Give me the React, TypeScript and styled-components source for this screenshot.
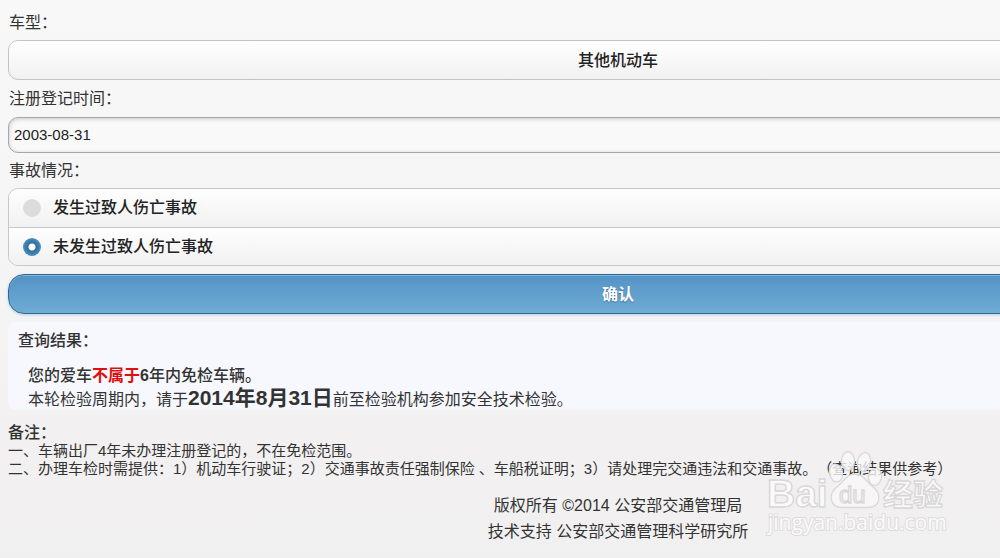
import React, { useState } from "react";
import styled, { createGlobalStyle } from "styled-components";

const GlobalStyle = createGlobalStyle`
  * { box-sizing: border-box; }
  html { min-height: 100%; background: #f2f0f1; }
  body {
    margin: 0;
    color: #333;
    font-family: "Liberation Sans", "Noto Sans CJK SC", sans-serif;
    font-size: 16px;
    text-spacing-trim: space-all;
  }
`;

const Viewport = styled.div`
  position: relative;
  min-height: 100vh;
  overflow: hidden;
  background: linear-gradient(#f8f8f8, #f5f4f5 55%, #f2f0f1 80%, #f1f0f0);
`;

/* The form is laid out wider than the window and runs off its right edge. */
const Page = styled.main`
  width: calc(100% + 236px);
  padding: 8px;
`;

const FieldLabel = styled.label`
  display: block;
  height: 28px;
  margin-bottom: 4px;
  padding-left: 1px;
  line-height: 30px;
`;

const GroupLabel = styled.legend`
  height: 28px;
  padding: 0 0 0 1px;
  margin-bottom: 4px;
  line-height: 30px;
`;

const Select = styled.select`
  display: block;
  width: 100%;
  height: 40px;
  margin-bottom: 4px;
  padding: 0;
  appearance: none;
  border: 1px solid #c4c4c4;
  border-radius: 10px;
  background: linear-gradient(#fff, #f1f1f1);
  color: #222;
  font: inherit;
  font-weight: 500;
  text-align: center;
  text-align-last: center;
`;

const TextInput = styled.input`
  display: block;
  width: 100%;
  height: 36px;
  margin: 5px 0 3px;
  padding: 0 5px 2px;
  border: 1px solid #a6a6a6;
  border-radius: 10px;
  background: #f9f9f9;
  box-shadow: inset 0 1px 4px rgba(0, 0, 0, 0.2);
  color: #222;
  font: inherit;
  font-size: 15px;
  outline: none;
`;

const Fieldset = styled.fieldset`
  margin: 0 0 8px;
  padding: 0;
  border: 0;
`;

const Options = styled.div`
  border: 1px solid #c8c8c8;
  border-radius: 10px;
  overflow: hidden;
`;

const Option = styled.label`
  display: flex;
  align-items: center;
  gap: 12px;
  height: 38px;
  padding-left: 14px;
  background: linear-gradient(#fefefe, #f1f1f1);
  color: #222;
  font-weight: 500;
  line-height: 20px;

  & + & {
    border-top: 1px solid #c8c8c8;
  }
`;

const Radio = styled.input`
  width: 18px;
  height: 18px;
  margin: 0;
  appearance: none;
  border-radius: 50%;
  background: #dcdcdc;

  &:checked {
    background: radial-gradient(circle, #fff 3px, #2f6f9f 4px, #4a90c0 9px);
  }
`;

const Submit = styled.button`
  display: block;
  width: 100%;
  height: 40px;
  margin-bottom: 8px;
  padding: 0 0 2px;
  border: 1px solid #2f6a92;
  border-radius: 16px;
  background: linear-gradient(#5393c5, #6facd5);
  box-shadow: inset 0 1px 0 rgba(255, 255, 255, 0.3), 0 1px 3px rgba(90, 150, 200, 0.4);
  color: #fff;
  font: inherit;
  font-weight: 700;
  text-shadow: 0 1px 1px #3e6790;
`;

const Result = styled.section`
  height: 88px;
  margin-bottom: 14px;
  padding: 8px 10px 0;
  border-radius: 8px;
  background: #f7f8fd;
`;

const ResultTitle = styled.h2`
  margin: 0 0 13px;
  font-size: 16px;
  font-weight: 500;
  line-height: 22px;
`;

const ResultLine = styled.p<{ $strong?: boolean }>`
  margin: 0;
  padding-left: 10px;
  font-weight: ${(p) => (p.$strong ? 500 : 400)};
  line-height: 22px;
`;

const Denied = styled.strong`
  color: #e00f0f;
  font-weight: 700;
`;

const DueDate = styled.strong`
  font-size: 21px;
`;

const Notes = styled.section`
  margin-bottom: 15px;
  font-size: 15px;
  line-height: 18px;
  white-space: nowrap;
`;

const NotesTitle = styled.h2`
  margin: 0;
  font-size: 16px;
  font-weight: 500;
  line-height: 18px;
`;

const Note = styled.p`
  margin: 0;
`;

const Footer = styled.footer`
  line-height: 26px;
  text-align: center;
`;

const Watermark = styled.svg`
  position: absolute;
  right: 46px;
  bottom: 8px;
  width: 194px;
  height: 104px;
  pointer-events: none;
`;

function BaiduWatermark() {
  return (
    <Watermark viewBox="0 0 194 104" aria-hidden="true">
      <g fill="#f9f8f9" fillOpacity="0.8" stroke="#dad8d9" strokeWidth="1.3">
        <ellipse cx="76" cy="27" rx="6.5" ry="9" transform="rotate(-12 76 27)" />
        <ellipse cx="88" cy="15" rx="6.5" ry="9.5" />
        <ellipse cx="104" cy="16" rx="6.5" ry="9.5" transform="rotate(12 104 16)" />
        <ellipse cx="115" cy="31" rx="6.5" ry="8.5" transform="rotate(10 115 31)" />
        <path d="M95 28 C103 28 106 35 112 40 C123 48 120 61.500 108 61.500 H82 C70 61.500 67 48 78 40 C84 35 87 28 95 28 Z" />
      </g>
      <g
        fill="#fafafa"
        stroke="#d8d6d7"
        strokeWidth="1.3"
        fontFamily="'Liberation Sans', 'Noto Sans CJK SC', sans-serif"
        fontWeight="700"
      >
        <text x="7" y="61" fontSize="39">Bai</text>
        <text x="79" y="57" fontSize="24" fontWeight="400">du</text>
        <text x="123" y="59" fontSize="30">经验</text>
      </g>
      <text
        x="8"
        y="84"
        fill="#fbfbfb"
        stroke="#dedcdd"
        strokeWidth="2"
        paintOrder="stroke"
        fontFamily="'Open Sans', sans-serif"
        fontSize="21"
      >
        jingyan.baidu.com
      </text>
    </Watermark>
  );
}

const accidentOptions = [
  { value: "yes", label: "发生过致人伤亡事故" },
  { value: "no", label: "未发生过致人伤亡事故" },
];

export default function App() {
  const [accident, setAccident] = useState("no");
  const [date, setDate] = useState("2003-08-31");

  return (
    <Viewport>
      <GlobalStyle />
      <Page>
        <form onSubmit={(e) => e.preventDefault()}>
          <FieldLabel htmlFor="vehicle">车型：</FieldLabel>
          <Select id="vehicle">
            <option>其他机动车</option>
          </Select>

          <FieldLabel htmlFor="registered">注册登记时间：</FieldLabel>
          <TextInput id="registered" value={date} onChange={(e) => setDate(e.target.value)} />

          <Fieldset>
            <GroupLabel>事故情况：</GroupLabel>
            <Options>
              {accidentOptions.map((o) => (
                <Option key={o.value}>
                  <Radio
                    type="radio"
                    name="accident"
                    checked={accident === o.value}
                    onChange={() => setAccident(o.value)}
                  />
                  {o.label}
                </Option>
              ))}
            </Options>
          </Fieldset>

          <Submit type="submit">确认</Submit>
        </form>

        <Result>
          <ResultTitle>查询结果：</ResultTitle>
          <ResultLine $strong>
            您的爱车<Denied>不属于</Denied><b>6</b>年内免检车辆。
          </ResultLine>
          <ResultLine>
            本轮检验周期内，请于<DueDate>2014年8月31日</DueDate>前至检验机构参加安全技术检验。
          </ResultLine>
        </Result>

        <Notes>
          <NotesTitle>备注：</NotesTitle>
          <Note>一、车辆出厂4年未办理注册登记的，不在免检范围。</Note>
          <Note>
            二、办理车检时需提供：1）机动车行驶证；2）交通事故责任强制保险 、车船税证明；3）请处理完交通违法和交通事故。（查询结果供参考）
          </Note>
        </Notes>

        <Footer>
          <div>版权所有 ©2014 公安部交通管理局</div>
          <div>技术支持 公安部交通管理科学研究所</div>
        </Footer>
      </Page>
      <BaiduWatermark />
    </Viewport>
  );
}
